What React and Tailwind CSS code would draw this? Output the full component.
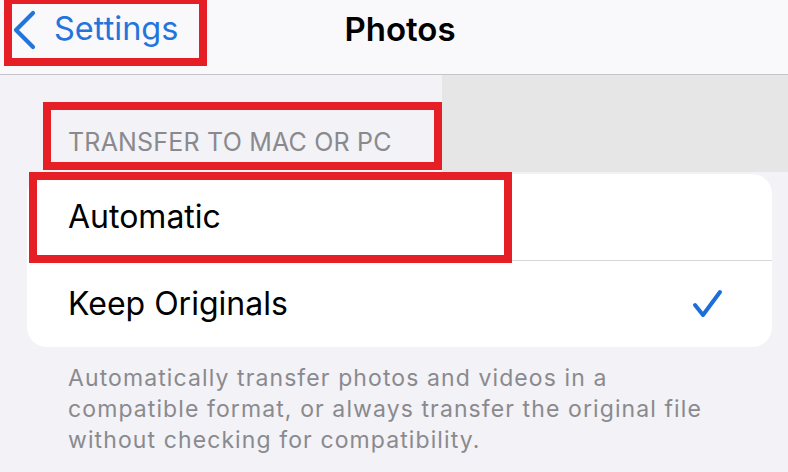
import React from 'react';

const font = { fontFamily: 'Inter, "Liberation Sans", sans-serif' };

const ChevronLeft = () => (
    <svg width="26" height="40" viewBox="0 0 26 40" className="shrink-0">
        <polyline points="21,3 4,20 21,37" fill="none" stroke="#2375dc" strokeWidth="4.2" strokeLinecap="round" strokeLinejoin="round" />
    </svg>
);

const Check = () => (
    <svg width="32" height="30" viewBox="0 0 32 30">
        <polyline points="3,16 11,26 28,3" fill="none" stroke="#1a6fd9" strokeWidth="4" strokeLinecap="round" strokeLinejoin="round" />
    </svg>
);

const App = () => {
    return (
        <div className="w-[788px] h-[472px] overflow-hidden bg-[#f2f2f7]" style={font}>
            {/* nav bar */}
            <div className="relative h-[75px] bg-[#f9f9fb] border-b border-[#c4c4c8] flex items-center">
                <div className="flex items-center pl-[12px] gap-[16px] pb-[15px]">
                    <ChevronLeft />
                    <span className="text-[32.5px] text-[#2375dc] leading-none">Settings</span>
                </div>
                <div className="absolute inset-x-0 top-0 h-full flex items-center justify-center pl-[12px] pb-[15px] pointer-events-none">
                    <span className="text-[33px] font-semibold text-black leading-none">Photos</span>
                </div>
                <div className="absolute left-[4px] top-[-4px] w-[203px] h-[70px] border-[8px] border-[#e61f27]" />
            </div>

            {/* section header */}
            <div className="flex h-[97px]">
                <div className="relative w-[442px] flex items-end pl-[68px] pb-[17px]">
                    <span className="text-[25px] text-[#8a8a8e] leading-none tracking-[0.2px]">TRANSFER TO MAC OR PC</span>
                    <div className="absolute left-[43px] top-[27px] w-[399px] h-[68px] border-[8px] border-[#e61f27]" />
                </div>
                <div className="flex-1 bg-[#e6e6e7]" />
            </div>

            {/* options card */}
            <div className="relative mt-[2px] ml-[27px] w-[745px] bg-white rounded-[20px]">
                <div className="h-[86px] flex items-center pl-[41px]">
                    <span className="text-[32px] text-black leading-none">Automatic</span>
                </div>
                <div className="ml-[41px] h-px bg-[#d8d8dc]" />
                <div className="h-[86px] flex items-center justify-between pl-[41px] pr-[48px]">
                    <span className="text-[32px] text-black leading-none">Keep Originals</span>
                    <Check />
                </div>
                <div className="absolute left-[2px] top-[-2px] w-[483px] h-[91px] border-[8px] border-[#e61f27]" />
            </div>

            {/* footer */}
            <div className="pl-[68px] pt-[16px] text-[23px] leading-[31px] tracking-[1.1px] text-[#8a8a8e] whitespace-nowrap">
                <div>Automatically transfer photos and videos in a</div>
                <div>compatible format, or always transfer the original file</div>
                <div>without checking for compatibility.</div>
            </div>
        </div>
    );
};

export default App;
